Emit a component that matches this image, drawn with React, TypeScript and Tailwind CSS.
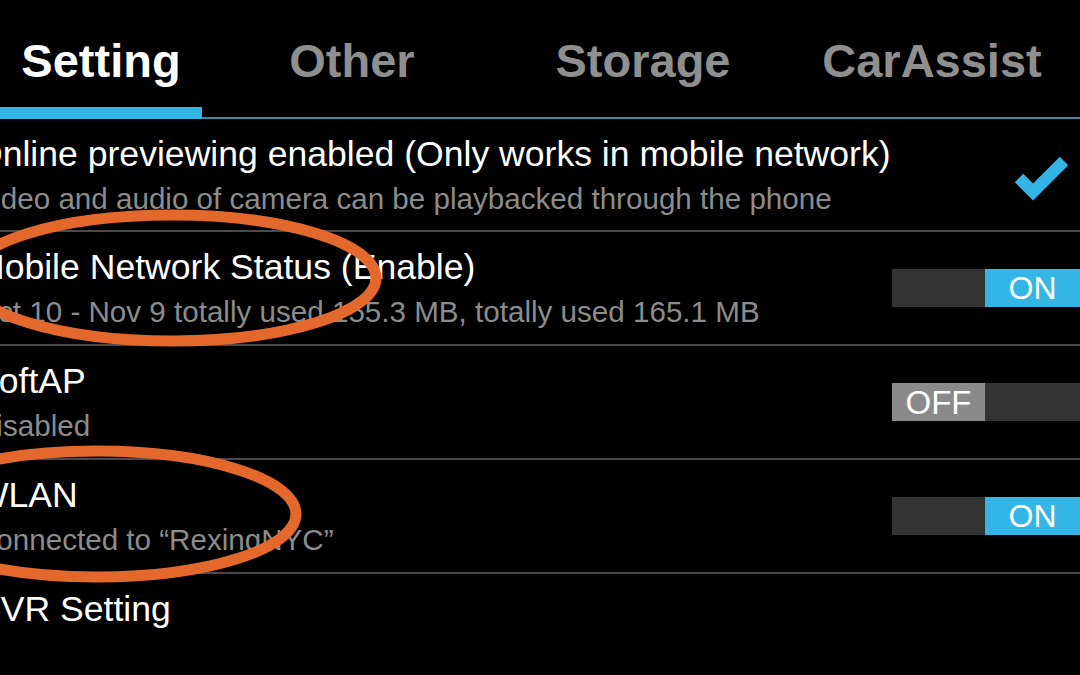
import React from "react";

type Tab = { label: string; width: string; active?: boolean };

const tabs: Tab[] = [
  { label: "Setting", width: "w-[202px]", active: true },
  { label: "Other", width: "w-[300px]" },
  { label: "Storage", width: "w-[282px]" },
  { label: "CarAssist", width: "w-[296px]" },
];

type Row = {
  title: string;
  subtitle?: string;
  control?: "check" | "on" | "off";
};

const rows: Row[] = [
  {
    title: "Online previewing enabled (Only works in mobile network)",
    subtitle: "Video and audio of camera can be playbacked through the phone",
    control: "check",
  },
  {
    title: "Mobile Network Status (Enable)",
    subtitle: "Oct 10 - Nov 9 totally used 155.3 MB, totally used 165.1 MB",
    control: "on",
  },
  { title: "SoftAP", subtitle: "Disabled", control: "off" },
  { title: "WLAN", subtitle: "Connected to \u201CRexingNYC\u201D", control: "on" },
  { title: "DVR Setting" },
];

function Toggle({ on }: { on: boolean }) {
  return (
    <div className="flex h-[38px] w-[188px] shrink-0">
      <div
        className={
          on
            ? "w-[93px] bg-[#333333]"
            : "flex w-[93px] items-center justify-center bg-[#8a8a8a] text-[33px] leading-none text-white"
        }
      >
        {on ? null : "OFF"}
      </div>
      <div
        className={
          on
            ? "flex flex-1 items-center justify-center bg-[#33b5e5] text-[32px] leading-none text-white"
            : "flex-1 bg-[#333333]"
        }
      >
        {on ? "ON" : null}
      </div>
    </div>
  );
}

function Check() {
  return (
    <svg width="60" height="50" viewBox="0 0 60 50" className="mr-[8px] mt-[12px] shrink-0">
      <polyline
        points="7,22 21,36 52,5"
        fill="none"
        stroke="#33b5e5"
        strokeWidth="12"
        strokeLinecap="butt"
        strokeLinejoin="miter"
      />
    </svg>
  );
}

export default function App() {
  return (
    <div className="relative h-[675px] w-[1080px] overflow-hidden bg-black font-['Liberation_Sans',Arial,sans-serif]">
      <div className="flex">
        {tabs.map((tab) => (
          <div key={tab.label} className={`flex flex-col ${tab.width}`}>
            <div
              className={`h-[107px] pt-[33px] text-center text-[47px] font-bold leading-[56px] ${
                tab.active ? "text-white" : "text-[#8f8f8f]"
              }`}
            >
              {tab.label}
            </div>
            {tab.active ? (
              <div className="h-[12px] bg-[#33b5e5]" />
            ) : (
              <div className="h-[12px] border-b-2 border-[#3b88ad]" />
            )}
          </div>
        ))}
      </div>

      <div>
        {rows.map((row, i) => (
          <div
            key={row.title}
            className={`flex items-center justify-between ${i === 0 ? "h-[111px]" : "h-[112px]"} ${
              i < rows.length - 1 ? "box-content border-b-2 border-[#4a4a4a]" : ""
            }`}
          >
            <div className="-ml-[25px] self-start whitespace-nowrap pt-[15px]">
              <div className="text-[35.6px] leading-[40px] text-white">{row.title}</div>
              {row.subtitle ? (
                <div className="mt-[8px] text-[29.6px] leading-[34px] text-[#8c8c8c]">{row.subtitle}</div>
              ) : null}
            </div>
            {row.control === "check" ? <Check /> : null}
            {row.control === "on" ? <Toggle on /> : null}
            {row.control === "off" ? <Toggle on={false} /> : null}
          </div>
        ))}
      </div>

      <svg
        className="pointer-events-none absolute left-0 top-0"
        width="1080"
        height="675"
        viewBox="0 0 1080 675"
      >
        <ellipse cx="172" cy="278" rx="204" ry="63" fill="none" stroke="#e4682c" strokeWidth="11" />
        <ellipse cx="97" cy="514" rx="199" ry="63" fill="none" stroke="#e4682c" strokeWidth="11" />
      </svg>
    </div>
  );
}
